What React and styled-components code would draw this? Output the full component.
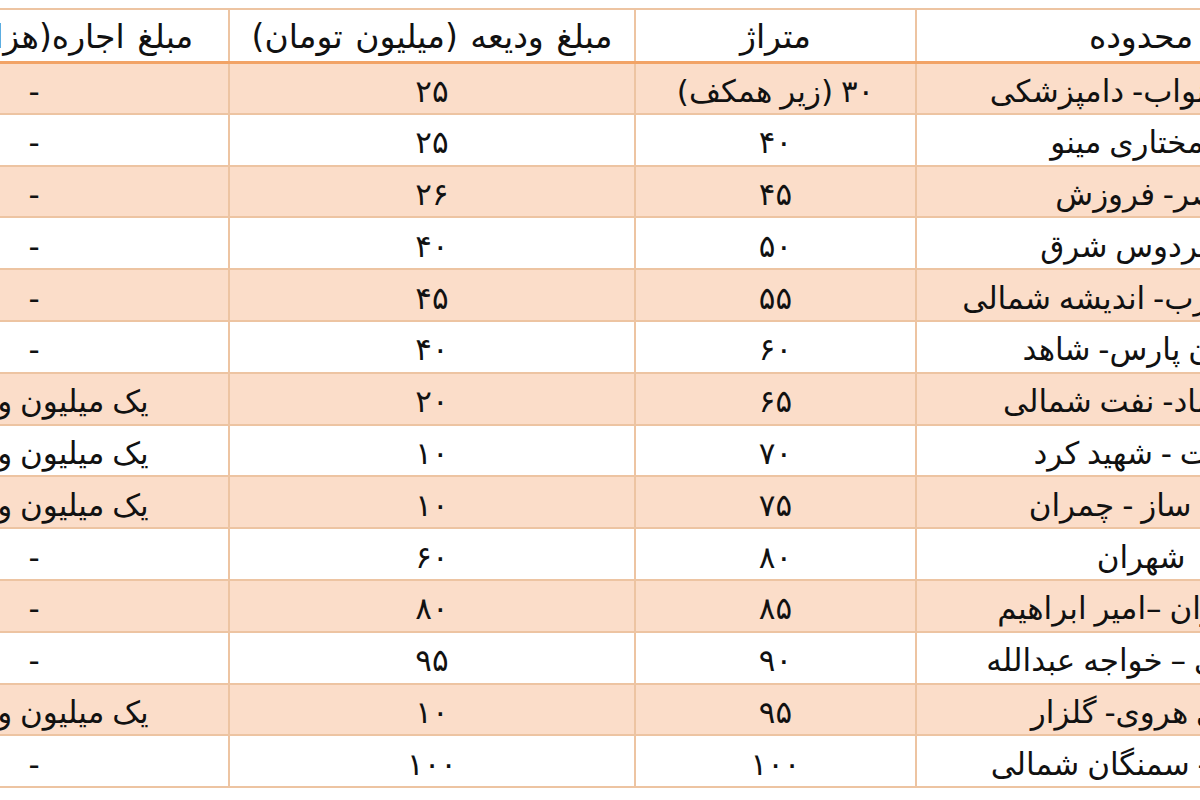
import React from 'react';
import styled, { createGlobalStyle } from 'styled-components';

const COLORS = {
  line: '#EDC4A2',
  thick: '#F2A366',
  peach: '#FBDDC9',
  text: '#111',
};

const GlobalStyle = createGlobalStyle`
  html, body {
    margin: 0;
    padding: 0;
    background: #fff;
  }
  body {
    font-family: "DejaVu Sans", "Liberation Sans", sans-serif;
  }
`;

const Page = styled.div`
  width: 1200px;
  height: 800px;
  overflow: hidden;
  background: #fff;
  padding-top: 8px;
  box-sizing: border-box;
`;

// the table is wider than the photo: both outer columns run past the edges
const Table = styled.table`
  direction: rtl;
  width: 1527px;
  margin-left: -162px;
  border-collapse: collapse;
  table-layout: fixed;
  color: ${COLORS.text};
  font-size: 31px;
  word-spacing: -2px;
`;

const HeadCell = styled.th`
  height: 53px;
  padding: 2px 0 0 0;
  font-weight: normal;
  font-size: 33px;
  word-spacing: 2px;
  text-align: center;
  border: 2px solid ${COLORS.line};
  border-bottom: 3px solid ${COLORS.thick};
  white-space: nowrap;
  overflow: hidden;
  box-sizing: border-box;
`;

const Row = styled.tr`
  height: 51.8px;
  background: ${p => (p.$shaded ? COLORS.peach : '#fff')};
`;

const Cell = styled.td`
  padding: 5px 0 0 0;
  text-align: center;
  border: 2px solid ${COLORS.line};
  white-space: nowrap;
  overflow: hidden;
`;

const rows = [
  ['خیابان نواب- دامپزشکی', '۳۰ (زیر همکف)', '۲۵', '-'],
  ['خ مختاری مینو', '۴۰', '۲۵', '-'],
  ['نصر- فروزش', '۴۵', '۲۶', '-'],
  ['خ فردوس شرق', '۵۰', '۴۰', '-'],
  ['شهرک غرب- اندیشه شمالی', '۵۵', '۴۵', '-'],
  ['تهران پارس- شاهد', '۶۰', '۴۰', '-'],
  ['خ اعتماد- نفت شمالی', '۶۵', '۲۰', 'یک میلیون و پانصد'],
  ['دولت - شهید کرد', '۷۰', '۱۰', 'یک میلیون و پانصد'],
  ['خانه ساز - چمران', '۷۵', '۱۰', 'یک میلیون و پانصد'],
  ['شهران', '۸۰', '۶۰', '-'],
  ['پاسداران –امیر ابراهیم', '۸۵', '۸۰', '-'],
  ['شریعتی – خواجه عبدالله', '۹۰', '۹۵', '-'],
  ['کوی هروی- گلزار', '۹۵', '۱۰', 'یک میلیون و پانصد'],
  ['لویزان- سمنگان شمالی', '۱۰۰', '۱۰۰', '-'],
];

export default function App() {
  return (
    <>
      <GlobalStyle />
      <Page>
        <Table>
          <colgroup>
            <col style={{ width: 450 }} />
            <col style={{ width: 281 }} />
            <col style={{ width: 406 }} />
            <col style={{ width: 390 }} />
          </colgroup>
          <thead>
            <tr>
              <HeadCell>محدوده</HeadCell>
              <HeadCell>متراژ</HeadCell>
              <HeadCell>مبلغ ودیعه (میلیون تومان)</HeadCell>
              <HeadCell>مبلغ اجاره(هزار تومان)</HeadCell>
            </tr>
          </thead>
          <tbody>
            {rows.map(([region, area, deposit, rent], i) => (
              <Row key={i} $shaded={i % 2 === 0}>
                <Cell>{region}</Cell>
                <Cell>{area}</Cell>
                <Cell>{deposit}</Cell>
                <Cell>{rent}</Cell>
              </Row>
            ))}
          </tbody>
        </Table>
      </Page>
    </>
  );
}
